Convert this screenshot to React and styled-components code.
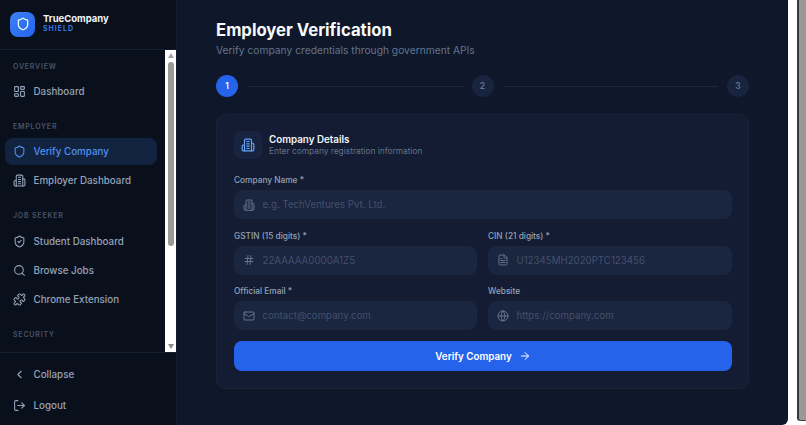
import React from "react";
import styled, { createGlobalStyle } from "styled-components";
import {
	ArrowRight,
	ChevronLeft,
	FileText,
	Globe,
	Hash,
	LayoutDashboard,
	LogOut,
	Mail,
	Puzzle,
	Search,
	Shield,
	ShieldCheck,
} from "lucide-react";

const GlobalStyle = createGlobalStyle`
	* {
		box-sizing: border-box;
	}
	html, body {
		margin: 0;
		height: 100%;
		overflow: hidden;
		background: #ffffff;
		font-family: "Inter", "Liberation Sans", sans-serif;
	}
	#root {
		height: 100%;
	}
`;

const Page = styled.div`
	display: flex;
	height: 425px;
	width: 806px;
	background: #ffffff;
`;

const Shell = styled.div`
	display: flex;
	width: 788px;
	flex-shrink: 0;
	height: 100%;
	border-bottom-right-radius: 6px;
	overflow: hidden;
`;

const Sidebar = styled.aside`
	width: 177px;
	flex-shrink: 0;
	display: flex;
	flex-direction: column;
	background: #0a0f1c;
	border-right: 1px solid #141c2e;
`;

const Brand = styled.div`
	height: 50px;
	flex-shrink: 0;
	display: flex;
	align-items: center;
	gap: 8px;
	padding: 0 10px 1px;
	border-bottom: 1px solid #161e30;
`;

const Logo = styled.div`
	width: 25px;
	height: 25px;
	border-radius: 8px;
	display: flex;
	align-items: center;
	justify-content: center;
	color: #ffffff;
	background: linear-gradient(135deg, #3b82f6, #2563eb);
`;

const BrandText = styled.div`
	display: flex;
	flex-direction: column;
	margin-top: -2px;
`;

const BrandName = styled.span`
	font-size: 9.5px;
	line-height: 11px;
	font-weight: 700;
	color: #f1f5f9;
`;

const BrandTag = styled.span`
	font-size: 7px;
	line-height: 9px;
	font-weight: 600;
	letter-spacing: 1px;
	color: #3b82f6;
`;

const NavArea = styled.div`
	flex: 1;
	min-height: 0;
	display: flex;
`;

const Nav = styled.nav`
	flex: 1;
	min-width: 0;
	overflow: hidden;
	padding: 9.5px 8px 0 5px;
`;

const Section = styled.section`
	display: flex;
	flex-direction: column;
	gap: 2.3px;
	margin-bottom: 15px;
`;

const SectionLabel = styled.div`
	height: 13px;
	line-height: 13px;
	margin: 0 0 3px 8px;
	font-size: 7px;
	font-weight: 600;
	letter-spacing: 0.8px;
	color: #475569;
`;

const Item = styled.a`
	height: 27px;
	flex-shrink: 0;
	display: flex;
	align-items: center;
	gap: 7.5px;
	padding: 0 8px;
	border-radius: 8px;
	font-size: 9.8px;
	font-weight: 500;
	color: ${(p) => (p.$active ? "#4f90ee" : "#94a3b8")};
	background: ${(p) => (p.$active ? "#12233f" : "transparent")};

	svg {
		flex-shrink: 0;
	}
`;

const ScrollBar = styled.div`
	width: 11px;
	flex-shrink: 0;
	display: flex;
	flex-direction: column;
	align-items: center;
	padding: 3px 0;
	background: #ffffff;
`;

const ScrollArrow = styled.div`
	flex-shrink: 0;
	width: 0;
	height: 0;
	border-left: 3.5px solid transparent;
	border-right: 3.5px solid transparent;
	border-bottom: ${(p) => (p.$down ? "0" : "5px solid #a3a3a3")};
	border-top: ${(p) => (p.$down ? "5px solid #8a8a8a" : "0")};
	margin-top: ${(p) => (p.$down ? "auto" : "0")};
`;

const ScrollThumb = styled.div`
	width: 6px;
	height: 184px;
	margin-top: 4px;
	border-radius: 3px;
	background: #9a9a98;
`;

const SideFooter = styled.div`
	flex-shrink: 0;
	display: flex;
	flex-direction: column;
	gap: 4px;
	padding: 8px 8px 6px 5px;
	border-top: 1px solid #161e30;
`;

const Main = styled.main`
	flex: 1;
	min-width: 0;
	padding: 19px 39px 0 39px;
	background: #0f172a;
`;

const Title = styled.h1`
	margin: 0;
	font-size: 16.7px;
	line-height: 22px;
	font-weight: 700;
	color: #f8fafc;
`;

const Subtitle = styled.p`
	margin: 3px 0 0;
	font-size: 10.25px;
	line-height: 13px;
	color: #64748b;
`;

const Stepper = styled.div`
	display: flex;
	align-items: center;
	gap: 9px;
	margin: 18px 0 17px;
`;

const Step = styled.div`
	width: 22px;
	height: 22px;
	border-radius: 50%;
	flex-shrink: 0;
	display: flex;
	align-items: center;
	justify-content: center;
	font-size: 8.5px;
	font-weight: 600;
	color: ${(p) => (p.$active ? "#ffffff" : "#64748b")};
	background: ${(p) => (p.$active ? "#2563eb" : "#18233d")};
`;

const StepLine = styled.div`
	flex: 1;
	height: 1px;
	background: #1e293b;
`;

const Card = styled.section`
	height: 275px;
	padding: 16px 16px 0 17px;
	border: 1px solid #1a2438;
	border-radius: 10px;
	background: #131c32;
`;

const CardHead = styled.div`
	display: flex;
	align-items: center;
	gap: 7px;
	margin-bottom: 16px;
`;

const CardIcon = styled.div`
	width: 28px;
	height: 28px;
	border-radius: 7px;
	display: flex;
	align-items: center;
	justify-content: center;
	color: #60a5fa;
	background: #18243f;
`;

const CardTitle = styled.div`
	font-size: 9.8px;
	line-height: 13px;
	font-weight: 600;
	color: #f1f5f9;
`;

const CardSub = styled.div`
	font-size: 8.35px;
	line-height: 11px;
	color: #64748b;
`;

const FieldGrid = styled.div`
	display: grid;
	grid-template-columns: 243px 1fr;
	gap: 11.5px 11px;
`;

const Field = styled.label`
	display: flex;
	flex-direction: column;
	gap: 4px;
	grid-column: ${(p) => (p.$wide ? "1 / -1" : "auto")};
`;

const FieldLabel = styled.span`
	font-size: 8.3px;
	line-height: 11px;
	font-weight: 500;
	color: #94a3b8;
`;

const InputWrap = styled.div`
	height: 29px;
	display: flex;
	align-items: center;
	gap: 7.5px;
	padding: 0 8px;
	border-radius: 8px;
	border: 1px solid #1a2640;
	background: #1a2540;
	color: #64748b;

	svg {
		flex-shrink: 0;
	}
`;

const Input = styled.input`
	flex: 1;
	min-width: 0;
	border: 0;
	outline: 0;
	padding: 0;
	background: transparent;
	font-family: inherit;
	font-size: 9.7px;
	color: #e2e8f0;

	&::placeholder {
		color: #44506a;
		opacity: 1;
	}
`;

const Submit = styled.button`
	width: 100%;
	height: 30px;
	margin-top: 11px;
	display: flex;
	align-items: center;
	justify-content: center;
	gap: 7px;
	border: 0;
	border-radius: 8px;
	background: #2563eb;
	color: #ffffff;
	font-family: inherit;
	font-size: 9.8px;
	font-weight: 600;
`;

const OuterScroll = styled.div`
	width: 18px;
	flex-shrink: 0;
	display: flex;
	padding-left: 9px;
	background: #ffffff;
`;

const OuterBar = styled.div`
	flex: 1;
	height: 421px;
	border-left: 2px solid #3a3a3a;
	border-bottom: 1px solid #4a4a4a;
	border-bottom-left-radius: 3px;
	background: #999999;
`;

// older lucide building shape, the current package draws it with a door
const Building = ({ size = 13, strokeWidth = 2 }) => (
	<svg
		width={size}
		height={size}
		viewBox="0 0 24 24"
		fill="none"
		stroke="currentColor"
		strokeWidth={strokeWidth}
		strokeLinecap="round"
		strokeLinejoin="round"
	>
		<path d="M6 22V4a2 2 0 0 1 2-2h8a2 2 0 0 1 2 2v18Z" />
		<path d="M6 12H4a2 2 0 0 0-2 2v6a2 2 0 0 0 2 2h2" />
		<path d="M18 9h2a2 2 0 0 1 2 2v9a2 2 0 0 1-2 2h-2" />
		<path d="M10 6h4" />
		<path d="M10 10h4" />
		<path d="M10 14h4" />
		<path d="M10 18h4" />
	</svg>
);

const iconProps = { size: 13, strokeWidth: 2 };

const sections = [
	{ label: "OVERVIEW", items: [{ icon: LayoutDashboard, text: "Dashboard" }] },
	{
		label: "EMPLOYER",
		items: [
			{ icon: Shield, text: "Verify Company", active: true },
			{ icon: Building, text: "Employer Dashboard" },
		],
	},
	{
		label: "JOB SEEKER",
		items: [
			{ icon: ShieldCheck, text: "Student Dashboard" },
			{ icon: Search, text: "Browse Jobs" },
			{ icon: Puzzle, text: "Chrome Extension" },
		],
	},
	{ label: "SECURITY", items: [] },
];

const App = () => {
	return (
		<>
			<GlobalStyle />
			<Page>
				<Shell>
					<Sidebar>
						<Brand>
							<Logo>
								<Shield size={14} strokeWidth={2} />
							</Logo>
							<BrandText>
								<BrandName>TrueCompany</BrandName>
								<BrandTag>SHIELD</BrandTag>
							</BrandText>
						</Brand>
						<NavArea>
							<Nav>
								{sections.map((section) => (
									<Section key={section.label}>
										<SectionLabel>{section.label}</SectionLabel>
										{section.items.map(({ icon: Icon, text, active }) => (
											<Item key={text} $active={active}>
												<Icon {...iconProps} />
												{text}
											</Item>
										))}
									</Section>
								))}
							</Nav>
							<ScrollBar>
								<ScrollArrow />
								<ScrollThumb />
								<ScrollArrow $down />
							</ScrollBar>
						</NavArea>
						<SideFooter>
							<Item>
								<ChevronLeft {...iconProps} />
								Collapse
							</Item>
							<Item>
								<LogOut {...iconProps} />
								Logout
							</Item>
						</SideFooter>
					</Sidebar>
					<Main>
						<Title>Employer Verification</Title>
						<Subtitle>Verify company credentials through government APIs</Subtitle>
						<Stepper>
							<Step $active>1</Step>
							<StepLine />
							<Step>2</Step>
							<StepLine />
							<Step>3</Step>
						</Stepper>
						<Card>
							<CardHead>
								<CardIcon>
									<Building size={14} />
								</CardIcon>
								<div>
									<CardTitle>Company Details</CardTitle>
									<CardSub>Enter company registration information</CardSub>
								</div>
							</CardHead>
							<FieldGrid>
								<Field $wide>
									<FieldLabel>Company Name *</FieldLabel>
									<InputWrap>
										<Building size={12} />
										<Input placeholder="e.g. TechVentures Pvt. Ltd." />
									</InputWrap>
								</Field>
								<Field>
									<FieldLabel>GSTIN (15 digits) *</FieldLabel>
									<InputWrap>
										<Hash size={12} />
										<Input placeholder="22AAAAA0000A1Z5" />
									</InputWrap>
								</Field>
								<Field>
									<FieldLabel>CIN (21 digits) *</FieldLabel>
									<InputWrap>
										<FileText size={12} />
										<Input placeholder="U12345MH2020PTC123456" />
									</InputWrap>
								</Field>
								<Field>
									<FieldLabel>Official Email *</FieldLabel>
									<InputWrap>
										<Mail size={12} />
										<Input placeholder="contact@company.com" />
									</InputWrap>
								</Field>
								<Field>
									<FieldLabel>Website</FieldLabel>
									<InputWrap>
										<Globe size={12} />
										<Input placeholder="https://company.com" />
									</InputWrap>
								</Field>
							</FieldGrid>
							<Submit>
								Verify Company
								<ArrowRight size={12} />
							</Submit>
						</Card>
					</Main>
				</Shell>
				<OuterScroll>
					<OuterBar />
				</OuterScroll>
			</Page>
		</>
	);
};

export default App;
